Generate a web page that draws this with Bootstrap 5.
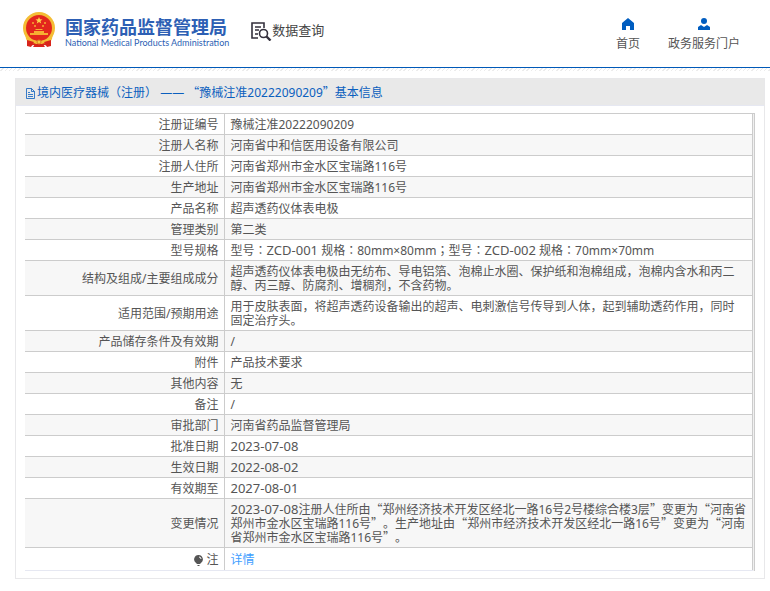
<!DOCTYPE html>
<html lang="zh-CN">
<head>
<meta charset="utf-8">
<meta name="viewport" content="width=device-width, initial-scale=1">
<title>国家药品监督管理局 数据查询</title>
<link href="https://cdn.jsdelivr.net/npm/bootstrap@5.3.0/dist/css/bootstrap.min.css" rel="stylesheet">
<style>
body { font: 12px/14px "Noto Sans", "Noto Sans CJK SC", sans-serif; color: #555; background: #fff; text-spacing-trim: space-all; }
a { text-decoration: none; }
.site-header { height: 67px; padding: 12px 30px 0 22px; }
.stripe { height: 4px; border-top: 1px solid #0059b8; background: repeating-linear-gradient(135deg, #fff 0 2px, #ececec 2px 3px); }
.brand { color: #2d5fb4; gap: 9px; }
.brand-name { font: bold 18px/22px "Noto Sans CJK SC", sans-serif; margin: 3px 0 0; }
.brand-en { font: 400 9px/12px Lato, sans-serif; }
.section-link { margin: 8px 0 0 22px; color: #444; font: 13px/20px "Noto Sans CJK SC", sans-serif; }
.top-nav { gap: 28px; padding-top: 6px; }
.top-nav a { color: #555; line-height: 18px; }
.top-nav svg { color: #005dc0; margin-bottom: 5px; }
.record { margin: 7px 5px 0 15px; border: 1px solid #e8e8ea; }
.record-title { background: #e9e9e9; color: #0b5fbe; font-size: 12px; line-height: 24px; padding: 2px 0 0 9px; border-bottom: 1px solid #e6e8f2; }
.record-title svg { margin-right: 1px; }
.record-body { padding: 7px 9px; }
.sheet { border: solid #ccc; border-width: 1px 1px 0 0; padding-right: 1px; background: #f0f0f0; }
.sheet table { color: #555; background: #fff; border-right: 1px solid #ccc; }
.sheet th, .sheet td { padding: 4px 6px 2px; border-bottom: 1px solid #ccc; }
.sheet th { width: 199px; padding-right: 5px; font-weight: 400; text-align: right; border-right: 1px solid #ccc; }
.sheet td.num { padding-top: 3px; padding-bottom: 3px; }
.sheet tr:nth-child(even) { background: #f7f7f7; }
.sheet tr:last-child > * { padding-top: 5px; padding-bottom: 3px; border-bottom-color: #e6e8f2; }
.sheet a { color: #409eff; }
.num { font-size: 13px; }
.cjk { font-family: "Noto Sans CJK SC", sans-serif; }
.mid { font-family: "Noto Sans CJK TC", sans-serif; }
span.num, .cjk, .mid { line-height: 1px; }
</style>
</head>
<body>
<header class="site-header d-flex align-items-start">
  <a class="brand d-flex" href="#">
    <svg width="34" height="36" viewBox="0 0 34 36" aria-hidden="true">
      <path d="M5 23h24l-1 11-6-1-5 2-5-2-6 1z" fill="#d8241b"/>
      <circle cx="17" cy="16" r="14.500" fill="#e3261d" stroke="#f4bd35" stroke-width="3"/>
      <path d="m17 5 1 2.300 2.500.1-2 1.600.7 2.500-2.200-1.400-2.200 1.400.7-2.500-2-1.600 2.500-.1z" fill="#ffd34b"/>
      <g fill="#f6ae32"><circle cx="11" cy="11" r="1"/><circle cx="23" cy="11" r="1"/><circle cx="13" cy="14" r="1"/><circle cx="21" cy="14" r="1"/>
      <path d="M13 18l1-1h6l1 1zM12 19h10v2h4v2H8v-2h4z"/></g>
      <path d="M3 20c2 7 8 9 14 9s12-2 14-9l-1 7-3 5-6-1-4 2-4-2-6 1-3-5z" fill="#f4bd35"/>
      <path d="M5 28l7 2-3 5-4-1zM29 28l-7 2 3 5 4-1zM13 32h8l2 3H11z" fill="#d8241b"/>
      <circle cx="17" cy="30" r="2" fill="#f7ca43" stroke="#db7a21"/>
    </svg>
    <span class="d-block text-nowrap">
      <span class="brand-name d-block">国家药品监督管理局</span>
      <span class="brand-en d-block">National Medical Products Administration</span>
    </span>
  </a>
  <a class="section-link d-flex text-nowrap" href="#">
    <svg width="21" height="21" viewBox="0 0 21 21" fill="none" stroke="#34313d" stroke-width="1.600" aria-hidden="true">
      <path d="M7 18H1V3h12v5M4 7h6M4 10h4M4 14h3"/><circle cx="12.500" cy="13.500" r="4"/><path d="m15.500 16.500 4 4" stroke-width="2.400"/>
    </svg>
    数据查询
  </a>
  <nav class="top-nav d-flex ms-auto text-nowrap text-center">
    <a href="#" class="d-flex flex-column align-items-center">
      <svg width="12" height="12" viewBox="0 0 12 12" fill="currentColor" aria-hidden="true"><path d="M6 0 0 5v7h4V8h4v4h4V5z"/></svg>
      首页
    </a>
    <a href="#" class="d-flex flex-column align-items-center">
      <svg width="12" height="12" viewBox="0 0 12 12" fill="currentColor" aria-hidden="true"><circle cx="6" cy="3" r="3"/><path d="M0 12V9l3-2 3 2 3-2 3 2v3z"/></svg>
      政务服务门户
    </a>
  </nav>
</header>
<div class="stripe"></div>
<main class="record">
  <h1 class="record-title d-flex align-items-center mb-0 fw-normal">
    <svg width="11" height="11" viewBox="0 0 11 11" fill="none" stroke="currentColor" stroke-opacity=".8" aria-hidden="true"><path d="M1.500.5h5l3 3v7h-8zM6.500.5v3h3M3 4.500h2M3 6.500h5M3 8.500h5"/></svg>
    <span>境内医疗器械<span class="mid" lang="zh-TW">（</span>注册<span class="mid" lang="zh-TW">）</span> —— <span class="cjk">“</span>豫械注准20222090209<span class="cjk">”</span>基本信息</span>
  </h1>
  <div class="record-body">
    <div class="sheet">
      <table class="w-100">
        <tbody>
        <tr><th scope="row">注册证编号</th><td>豫械注准20222090209</td></tr>
        <tr><th scope="row">注册人名称</th><td>河南省中和信医用设备有限公司</td></tr>
        <tr><th scope="row">注册人住所</th><td>河南省郑州市金水区宝瑞路116号</td></tr>
        <tr><th scope="row">生产地址</th><td>河南省郑州市金水区宝瑞路116号</td></tr>
        <tr><th scope="row">产品名称</th><td>超声透药仪体表电极</td></tr>
        <tr><th scope="row">管理类别</th><td>第二类</td></tr>
        <tr><th scope="row">型号规格</th><td>型号<span class="mid" lang="zh-TW">：</span><span class="num">ZCD-001</span> 规格<span class="mid" lang="zh-TW">：</span>80mm×80mm<span class="mid" lang="zh-TW">；</span>型号<span class="mid" lang="zh-TW">：</span><span class="num">ZCD-002</span> 规格<span class="mid" lang="zh-TW">：</span>70mm×70mm</td></tr>
        <tr><th scope="row">结构及组成/主要组成成分</th><td>超声透药仪体表电极由无纺布、导电铝箔、泡棉止水圈、保护纸和泡棉组成，泡棉内含水和丙二醇、丙三醇、防腐剂、增稠剂，不含药物。</td></tr>
        <tr><th scope="row">适用范围/预期用途</th><td>用于皮肤表面，将超声透药设备输出的超声、电刺激信号传导到人体，起到辅助透药作用，同时固定治疗头。</td></tr>
        <tr><th scope="row">产品储存条件及有效期</th><td>/</td></tr>
        <tr><th scope="row">附件</th><td>产品技术要求</td></tr>
        <tr><th scope="row">其他内容</th><td>无</td></tr>
        <tr><th scope="row">备注</th><td>/</td></tr>
        <tr><th scope="row">审批部门</th><td>河南省药品监督管理局</td></tr>
        <tr><th scope="row">批准日期</th><td class="num">2023-07-08</td></tr>
        <tr><th scope="row">生效日期</th><td class="num">2022-08-02</td></tr>
        <tr><th scope="row">有效期至</th><td class="num">2027-08-01</td></tr>
        <tr><th scope="row">变更情况</th><td><span class="num">2023-07-08</span>注册人住所由<span class="cjk">“</span>郑州经济技术开发区经北一路16号2号楼综合楼3层<span class="cjk">”</span>变更为<span class="cjk">“</span>河南省郑州市金水区宝瑞路116号<span class="cjk">”</span>。生产地址由<span class="cjk">“</span>郑州市经济技术开发区经北一路16号<span class="cjk">”</span>变更为<span class="cjk">“</span>河南省郑州市金水区宝瑞路116号<span class="cjk">”</span>。</td></tr>
        <tr><th scope="row"><svg width="9" height="12" viewBox="0 0 9 12" fill="#555" aria-hidden="true"><path d="M4.500 0a4.300 4.300 0 0 1 2.700 7.700L6 9H3L1.800 7.700A4.300 4.300 0 0 1 4.500 0zM3 10h3l-1 1H4z"/><path d="M5 2q2 0 2 2" fill="none" stroke="#fff"/></svg> 注</th><td><a href="#">详情</a></td></tr>
        </tbody>
      </table>
    </div>
  </div>
</main>
<script src="https://cdn.jsdelivr.net/npm/bootstrap@5.3.0/dist/js/bootstrap.bundle.min.js"></script>
</body>
</html>
